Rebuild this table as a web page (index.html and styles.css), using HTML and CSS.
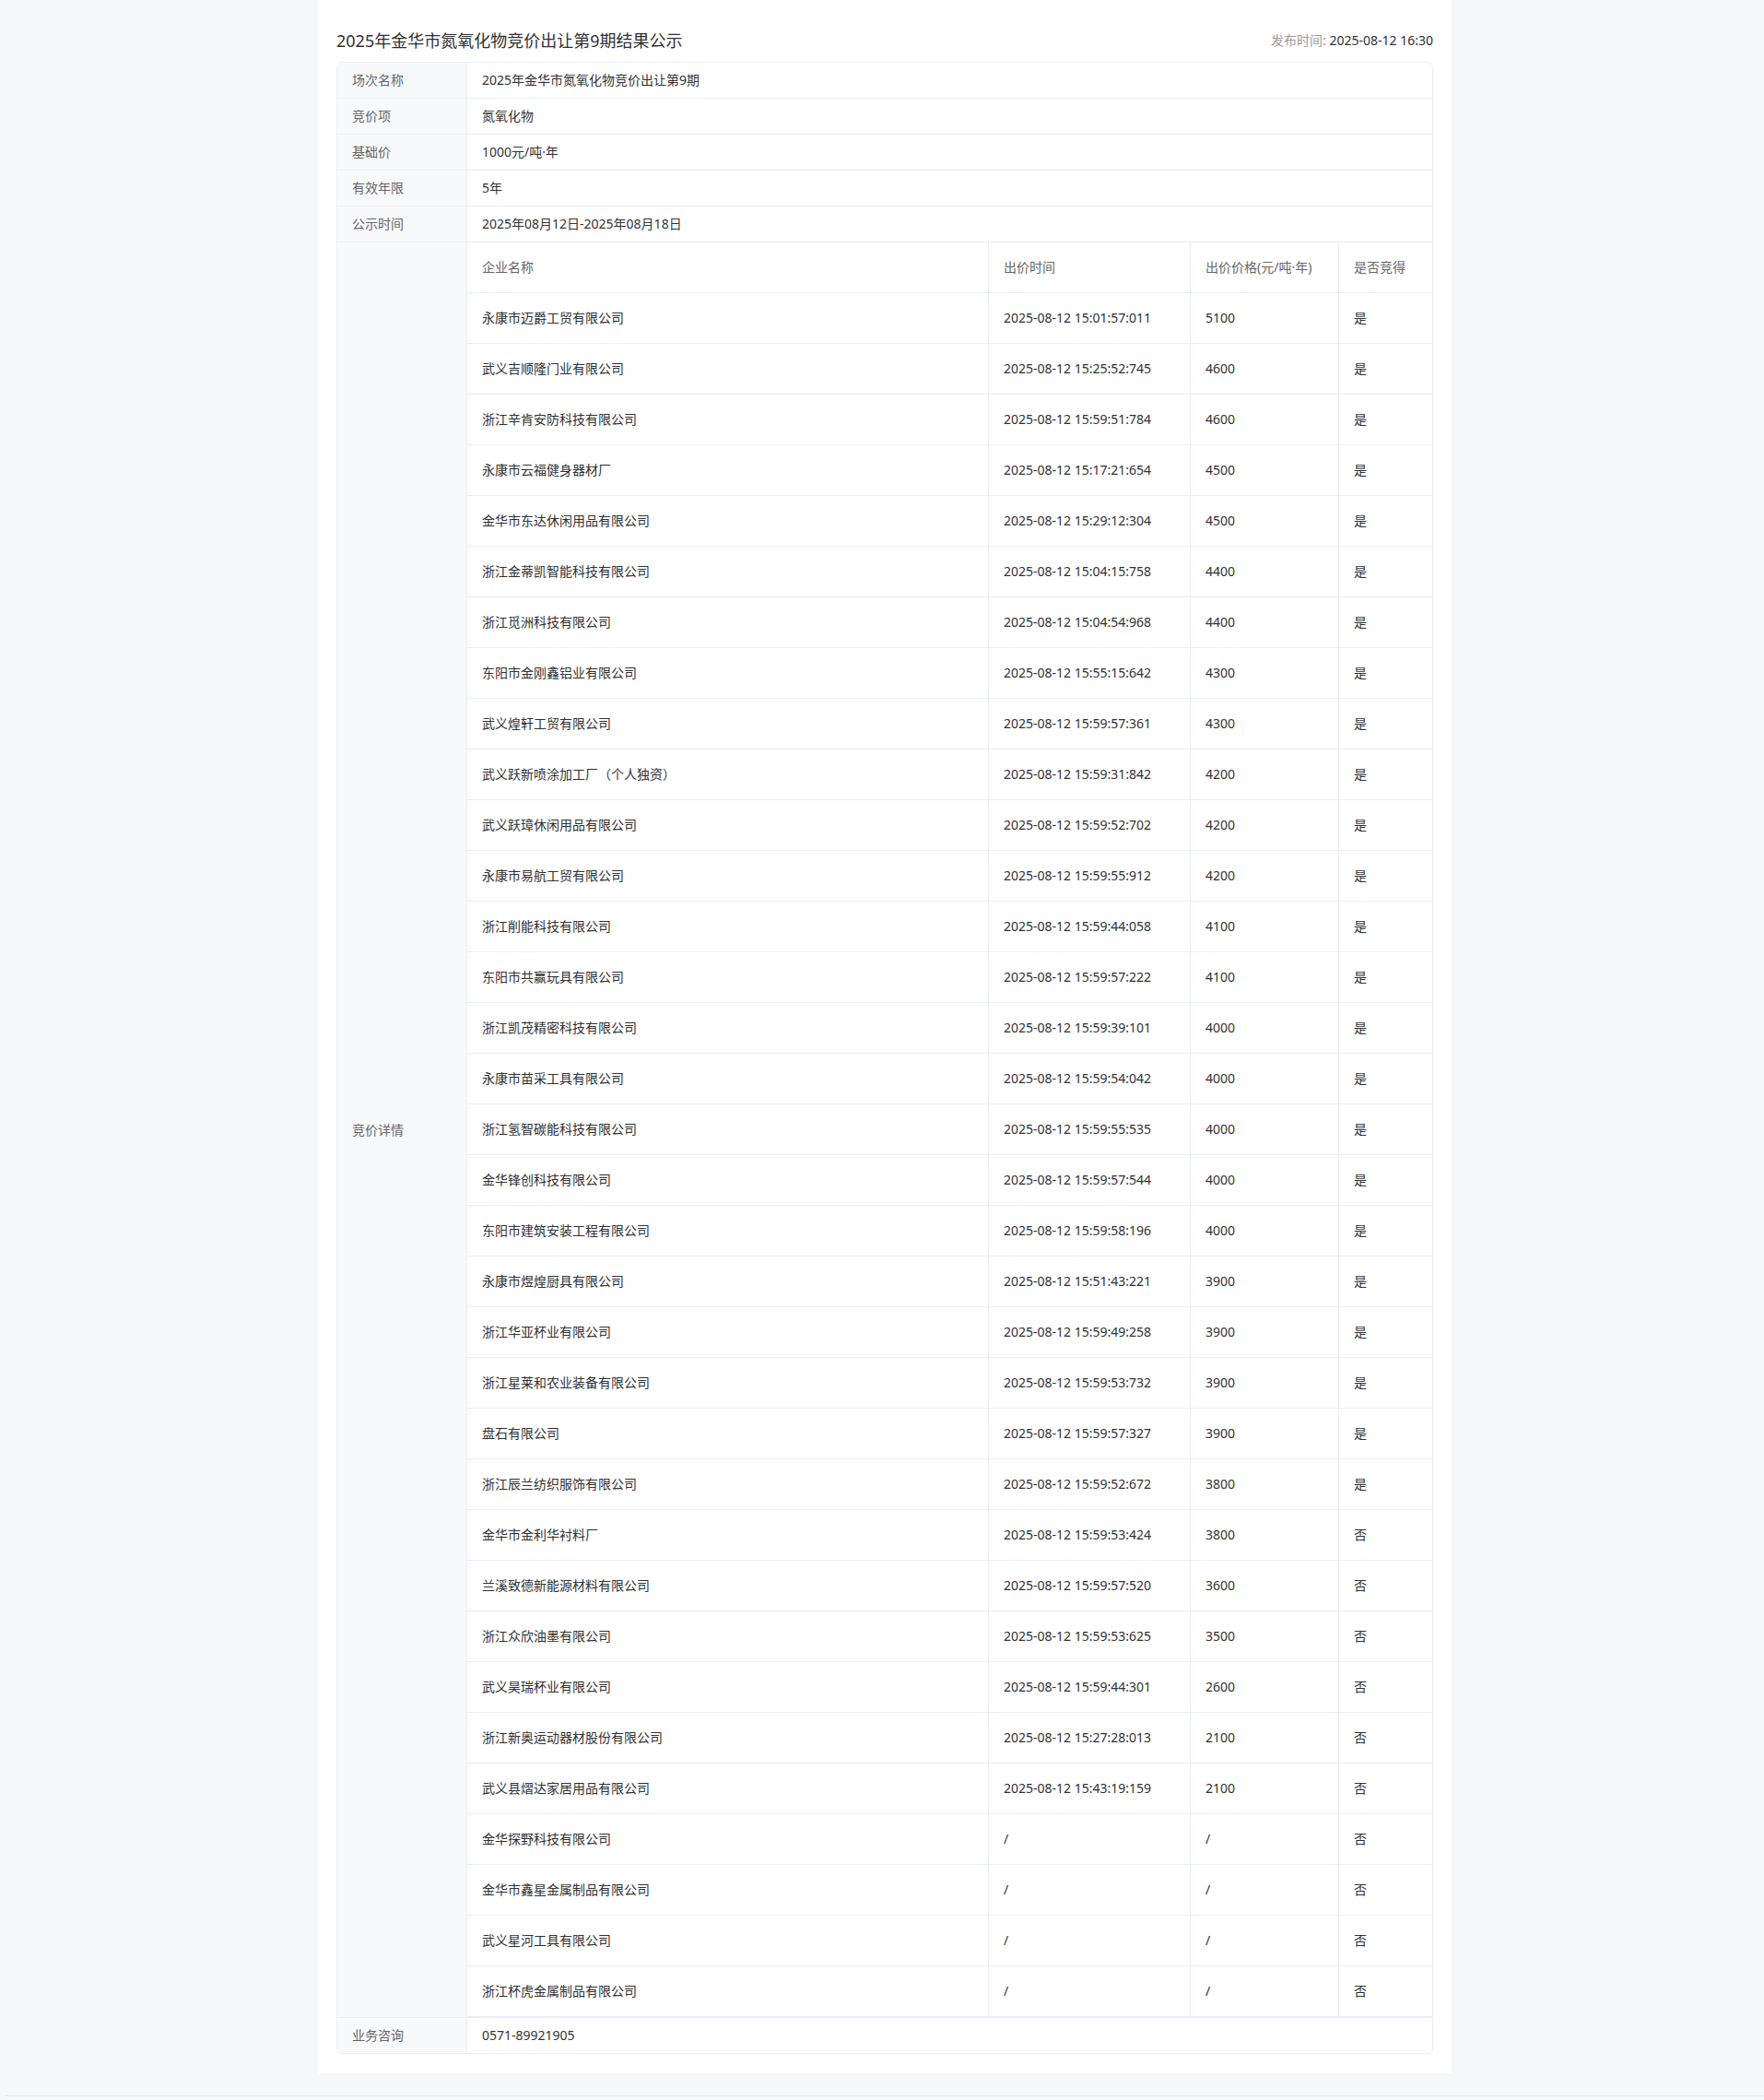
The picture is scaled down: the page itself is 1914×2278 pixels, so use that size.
FILE: index.html
```html
<!DOCTYPE html>
<html lang="zh-CN">
<head>
    <meta charset="UTF-8">
    <meta name="viewport" content="width=device-width, initial-scale=1.0">
    <title>2025年金华市氮氧化物竞价出让第9期结果公示</title>
    <link rel="stylesheet" href="styles.css">
</head>
<body>

<div class="panel">
    <div class="panel-header">
        <h1 class="title">2025年金华市氮氧化物竞价出让第9期结果公示</h1>
        <div class="publish-time"><span class="muted">发布时间:</span> 2025-08-12 16:30</div>
    </div>

    <div class="info">
        <table class="info-table">
            <colgroup>
                <col class="label-col">
                <col>
            </colgroup>
            <tr>
                <th>场次名称</th>
                <td>2025年金华市氮氧化物竞价出让第9期</td>
            </tr>
            <tr>
                <th>竞价项</th>
                <td>氮氧化物</td>
            </tr>
            <tr>
                <th>基础价</th>
                <td>1000元/吨·年</td>
            </tr>
            <tr>
                <th>有效年限</th>
                <td>5年</td>
            </tr>
            <tr>
                <th>公示时间</th>
                <td>2025年08月12日-2025年08月18日</td>
            </tr>
            <tr>
                <th>竞价详情</th>
                <td class="nested">
                    <table class="bids">
                        <colgroup>
                            <col class="c-name">
                            <col class="c-time">
                            <col class="c-price">
                            <col>
                        </colgroup>
                        <thead>
                            <tr>
                                <th>企业名称</th>
                                <th>出价时间</th>
                                <th>出价价格(元/吨·年)</th>
                                <th>是否竞得</th>
                            </tr>
                        </thead>
                        <tbody>
                            <tr><td>永康市迈爵工贸有限公司</td><td>2025-08-12 15:01:57:011</td><td>5100</td><td>是</td></tr>
                            <tr><td>武义吉顺隆门业有限公司</td><td>2025-08-12 15:25:52:745</td><td>4600</td><td>是</td></tr>
                            <tr><td>浙江辛肯安防科技有限公司</td><td>2025-08-12 15:59:51:784</td><td>4600</td><td>是</td></tr>
                            <tr><td>永康市云福健身器材厂</td><td>2025-08-12 15:17:21:654</td><td>4500</td><td>是</td></tr>
                            <tr><td>金华市东达休闲用品有限公司</td><td>2025-08-12 15:29:12:304</td><td>4500</td><td>是</td></tr>
                            <tr><td>浙江金蒂凯智能科技有限公司</td><td>2025-08-12 15:04:15:758</td><td>4400</td><td>是</td></tr>
                            <tr><td>浙江觅洲科技有限公司</td><td>2025-08-12 15:04:54:968</td><td>4400</td><td>是</td></tr>
                            <tr><td>东阳市金刚鑫铝业有限公司</td><td>2025-08-12 15:55:15:642</td><td>4300</td><td>是</td></tr>
                            <tr><td>武义煌轩工贸有限公司</td><td>2025-08-12 15:59:57:361</td><td>4300</td><td>是</td></tr>
                            <tr><td>武义跃新喷涂加工厂（个人独资）</td><td>2025-08-12 15:59:31:842</td><td>4200</td><td>是</td></tr>
                            <tr><td>武义跃璋休闲用品有限公司</td><td>2025-08-12 15:59:52:702</td><td>4200</td><td>是</td></tr>
                            <tr><td>永康市易航工贸有限公司</td><td>2025-08-12 15:59:55:912</td><td>4200</td><td>是</td></tr>
                            <tr><td>浙江削能科技有限公司</td><td>2025-08-12 15:59:44:058</td><td>4100</td><td>是</td></tr>
                            <tr><td>东阳市共赢玩具有限公司</td><td>2025-08-12 15:59:57:222</td><td>4100</td><td>是</td></tr>
                            <tr><td>浙江凯茂精密科技有限公司</td><td>2025-08-12 15:59:39:101</td><td>4000</td><td>是</td></tr>
                            <tr><td>永康市苗采工具有限公司</td><td>2025-08-12 15:59:54:042</td><td>4000</td><td>是</td></tr>
                            <tr><td>浙江氢智碳能科技有限公司</td><td>2025-08-12 15:59:55:535</td><td>4000</td><td>是</td></tr>
                            <tr><td>金华锋创科技有限公司</td><td>2025-08-12 15:59:57:544</td><td>4000</td><td>是</td></tr>
                            <tr><td>东阳市建筑安装工程有限公司</td><td>2025-08-12 15:59:58:196</td><td>4000</td><td>是</td></tr>
                            <tr><td>永康市煜煌厨具有限公司</td><td>2025-08-12 15:51:43:221</td><td>3900</td><td>是</td></tr>
                            <tr><td>浙江华亚杯业有限公司</td><td>2025-08-12 15:59:49:258</td><td>3900</td><td>是</td></tr>
                            <tr><td>浙江星莱和农业装备有限公司</td><td>2025-08-12 15:59:53:732</td><td>3900</td><td>是</td></tr>
                            <tr><td>盘石有限公司</td><td>2025-08-12 15:59:57:327</td><td>3900</td><td>是</td></tr>
                            <tr><td>浙江辰兰纺织服饰有限公司</td><td>2025-08-12 15:59:52:672</td><td>3800</td><td>是</td></tr>
                            <tr><td>金华市金利华衬料厂</td><td>2025-08-12 15:59:53:424</td><td>3800</td><td>否</td></tr>
                            <tr><td>兰溪致德新能源材料有限公司</td><td>2025-08-12 15:59:57:520</td><td>3600</td><td>否</td></tr>
                            <tr><td>浙江众欣油墨有限公司</td><td>2025-08-12 15:59:53:625</td><td>3500</td><td>否</td></tr>
                            <tr><td>武义昊瑞杯业有限公司</td><td>2025-08-12 15:59:44:301</td><td>2600</td><td>否</td></tr>
                            <tr><td>浙江新奥运动器材股份有限公司</td><td>2025-08-12 15:27:28:013</td><td>2100</td><td>否</td></tr>
                            <tr><td>武义县熠达家居用品有限公司</td><td>2025-08-12 15:43:19:159</td><td>2100</td><td>否</td></tr>
                            <tr><td>金华探野科技有限公司</td><td>/</td><td>/</td><td>否</td></tr>
                            <tr><td>金华市鑫星金属制品有限公司</td><td>/</td><td>/</td><td>否</td></tr>
                            <tr><td>武义星河工具有限公司</td><td>/</td><td>/</td><td>否</td></tr>
                            <tr><td>浙江杯虎金属制品有限公司</td><td>/</td><td>/</td><td>否</td></tr>
                        </tbody>
                    </table>
                </td>
            </tr>
            <tr>
                <th>业务咨询</th>
                <td>0571-89921905</td>
            </tr>
        </table>
    </div>
</div>

<div class="footer"></div>

</body>
</html>
```

FILE: styles.css
```css
* {
    box-sizing: border-box;
}
body {
    margin: 0;
    padding: 0 0 0 6px;
    background-color: #f5f7fa;
    font-family: "Microsoft YaHei", "Noto Sans", "Noto Sans CJK SC", sans-serif;
    font-size: 14px;
    color: #333;
}
.panel {
    width: 1230px;
    margin: 0 auto;
    padding: 19px 20px 21px;
    background-color: #fff;
}
.panel-header {
    display: flex;
    justify-content: space-between;
    align-items: center;
    height: 48px;
}
.title {
    margin: 0;
    font-size: 18px;
    font-weight: normal;
    color: #303133;
}
.publish-time {
    font-size: 14px;
    color: #303133;
}
.muted {
    color: #999;
}

/* info table */
.info {
    border: 1px solid #ebeef5;
    border-radius: 6px;
    overflow: hidden;
}
.info-table {
    width: 100%;
    border-collapse: separate;
    border-spacing: 0;
    table-layout: fixed;
}
.label-col {
    width: 141px;
}
.info-table > tbody > tr > th,
.info-table > tbody > tr > td {
    padding: 0 16px;
    line-height: 38px;
    text-align: left;
    border-bottom: 1px solid #ebeef5;
}
.info-table > tbody > tr > th {
    font-weight: normal;
    color: #666;
    background-color: #f8f9fb;
    border-right: 1px solid #ebeef5;
}
.info-table > tbody > tr:last-child > th,
.info-table > tbody > tr:last-child > td {
    border-bottom: none;
}
.info-table > tbody > tr > td.nested {
    padding: 0;
}

/* bid list */
.bids {
    width: 100%;
    border-collapse: separate;
    border-spacing: 0;
    table-layout: fixed;
}
.c-name {
    width: 566px;
}
.c-time {
    width: 219px;
}
.c-price {
    width: 161px;
}
.bids th,
.bids td {
    padding: 0 16px;
    line-height: 54px;
    text-align: left;
    border-bottom: 1px solid #ebeef5;
    border-right: 1px solid #ebeef5;
    white-space: nowrap;
}
.bids th:last-child,
.bids td:last-child {
    border-right: none;
}
.bids th {
    font-weight: normal;
    color: #666;
}
.bids td {
    color: #303133;
}

.footer {
    margin-top: 24px;
    height: 6px;
    border-top: 1px solid #e4e7ed;
}
```
